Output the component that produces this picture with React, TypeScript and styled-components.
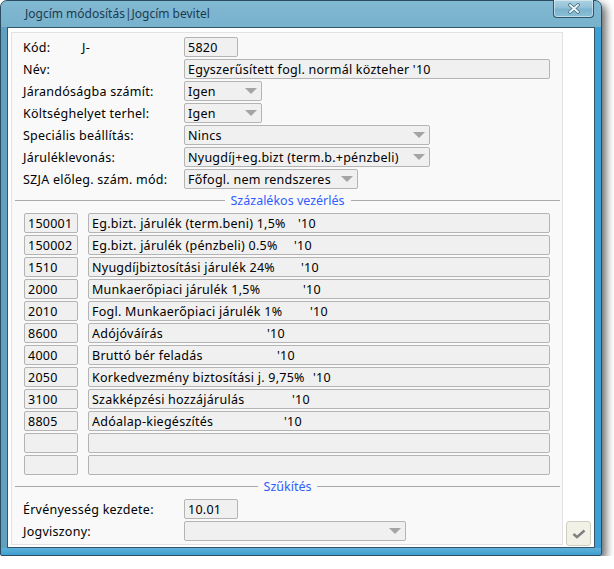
import React from 'react';
import styled, { createGlobalStyle } from 'styled-components';

const GlobalStyle = createGlobalStyle`
  html, body { margin: 0; padding: 0; background: #ffffff; }
  body { font-family: "Segoe UI", "Noto Sans", sans-serif; font-size: 12.5px; letter-spacing: 0.25px; color: #000; }
  * { box-sizing: border-box; }
`;

const Window = styled.div`
  width: 602px;
  height: 556px;
  border: 1px solid #2c4c5f;
  border-radius: 7px 7px 2px 2px;
  background:
    linear-gradient(to top, #3f9fd1 0, #5db0d8 7px, transparent 7px),
    linear-gradient(90deg, #5f9fc1 0%, #79b3ce 12%, #7bb4cf 80%, #3a9fd4 100%);
  box-shadow: 4px 4px 8px rgba(0, 0, 0, 0.6);
  display: flex;
  flex-direction: column;
  padding: 0 6px 7px 6px;
`;

const TitleBar = styled.div`
  height: 26px;
  display: flex;
  justify-content: space-between;
  align-items: flex-start;
  background: linear-gradient(to bottom, #82b9d3, #77b1cc);
  margin: 0 -6px;
  padding: 0 6px;
  border-radius: 6px 6px 0 0;
`;

const TitleText = styled.div`
  padding: 4px 0 0 18px;
  font-size: 12px;
  letter-spacing: 0;
  line-height: 18px;
  color: #1d3a4d;
`;

const CloseButton = styled.div`
  width: 41px;
  height: 18px;
  margin: -1px 1px 0 0;
  border: 1px solid #2f5467;
  border-top: none;
  border-radius: 0 0 4px 4px;
  background: linear-gradient(to bottom, #aed1e2 0%, #92c1d7 45%, #7cb3cd 55%, #8bc0d7 100%);
  box-shadow: inset 0 0 0 1px rgba(255, 255, 255, 0.45);
  display: flex;
  align-items: center;
  justify-content: center;
`;

const Client = styled.div`
  flex: 1;
  border: 1px solid #34566a;
  background: #ffffff;
  display: flex;
  padding: 4px 3px 2px 3px;
  gap: 3px;
`;

const Panel = styled.div`
  width: 552px;
  flex-shrink: 0;
  border: 1px solid #e2e2e2;
  background: #f9f9f9;
  padding: 4px 2px 0 3px;
  display: flex;
  flex-direction: column;
`;

const SideColumn = styled.div`
  flex: 1;
  display: flex;
  align-items: flex-end;
`;

const OkButton = styled.div`
  width: 25px;
  height: 25px;
  margin-bottom: -1px;
  border: 1px solid #cfcfc0;
  border-radius: 3px;
  background: #f2f1e8;
  display: flex;
  align-items: center;
  justify-content: center;
`;

const FormRow = styled.div`
  height: 20px;
  margin-bottom: 2px;
  padding-left: 8px;
  display: flex;
  align-items: center;
  flex-shrink: 0;
`;

const Label = styled.div`
  width: 161px;
  flex-shrink: 0;
  white-space: nowrap;
  display: flex;
`;

const KodText = styled.span`
  width: 59px;
`;

const Field = styled.div<{ $w: number }>`
  width: ${(p) => p.$w}px;
  height: 20px;
  border: 1px solid #b4b4b4;
  border-radius: 2px;
  background: #f0f0f0;
  padding: 0 3px;
  display: flex;
  align-items: center;
  white-space: nowrap;
  overflow: hidden;
  flex-shrink: 0;
`;

const Arrow = styled.span`
  margin-left: auto;
  margin-right: 1px;
  width: 0;
  height: 0;
  border-left: 6px solid transparent;
  border-right: 6px solid transparent;
  border-top: 6px solid #a4a4a4;
`;

const SectionHeader = styled.div`
  height: 18px;
  margin-bottom: 4px;
  display: flex;
  align-items: center;
  gap: 6px;
  flex-shrink: 0;
`;

const HeaderLine = styled.div`
  flex: 1;
  height: 1px;
  background: #a9a9a9;
`;

const HeaderText = styled.span`
  letter-spacing: 0;
  color: #2f5dff;
`;

const GridRow = styled.div`
  height: 20px;
  margin-bottom: 2px;
  padding-left: 9px;
  display: flex;
  gap: 10px;
  flex-shrink: 0;
`;

const NameText = styled.span<{ $w: number }>`
  display: inline-block;
  width: ${(p) => p.$w}px;
  flex-shrink: 0;
`;

type Item = { code: string; name: string; at: number };

const items: Item[] = [
  { code: '150001', name: 'Eg.bizt. járulék (term.beni) 1,5%', at: 206 },
  { code: '150002', name: 'Eg.bizt. járulék (pénzbeli) 0.5%', at: 202 },
  { code: '1510', name: 'Nyugdíjbiztosítási járulék 24%', at: 209 },
  { code: '2000', name: 'Munkaerőpiaci járulék 1,5%', at: 211 },
  { code: '2010', name: 'Fogl. Munkaerőpiaci járulék 1%', at: 218 },
  { code: '8600', name: 'Adójóváírás', at: 175 },
  { code: '4000', name: 'Bruttó bér feladás', at: 185 },
  { code: '2050', name: 'Korkedvezmény biztosítási j. 9,75%', at: 221 },
  { code: '3100', name: 'Szakképzési hozzájárulás', at: 200 },
  { code: '8805', name: 'Adóalap-kiegészítés', at: 192 },
];

const CloseIcon = () => (
  <svg width="14" height="11" viewBox="0 0 14 11">
    <path d="M3 2 L11 9 M11 2 L3 9" stroke="#47707f" strokeWidth="3.6" strokeLinecap="round" fill="none" />
    <path d="M3 2 L11 9 M11 2 L3 9" stroke="#eef6fa" strokeWidth="1.9" strokeLinecap="round" fill="none" />
  </svg>
);

const CheckIcon = () => (
  <svg width="14" height="10" viewBox="0 0 14 10">
    <path d="M1.5 5 L5 8.2 L12.5 1.5" stroke="#7f7f7f" strokeWidth="2.4" fill="none" strokeLinejoin="miter" />
  </svg>
);

export default function App() {
  return (
    <>
      <GlobalStyle />
      <Window>
        <TitleBar>
          <TitleText>Jogcím módosítás|Jogcím bevitel</TitleText>
          <CloseButton>
            <CloseIcon />
          </CloseButton>
        </TitleBar>
        <Client>
          <Panel>
            <FormRow>
              <Label>
                <KodText>Kód:</KodText>J-
              </Label>
              <Field $w={54}>5820</Field>
            </FormRow>
            <FormRow>
              <Label>Név:</Label>
              <Field $w={366}>Egyszerűsített fogl. normál közteher '10</Field>
            </FormRow>
            <FormRow>
              <Label>Járandóságba számít:</Label>
              <Field $w={78}>
                Igen<Arrow />
              </Field>
            </FormRow>
            <FormRow>
              <Label>Költséghelyet terhel:</Label>
              <Field $w={78}>
                Igen<Arrow />
              </Field>
            </FormRow>
            <FormRow>
              <Label>Speciális beállítás:</Label>
              <Field $w={246}>
                Nincs<Arrow />
              </Field>
            </FormRow>
            <FormRow>
              <Label>Járuléklevonás:</Label>
              <Field $w={246}>
                Nyugdíj+eg.bizt (term.b.+pénzbeli)<Arrow />
              </Field>
            </FormRow>
            <FormRow>
              <Label>SZJA előleg. szám. mód:</Label>
              <Field $w={174}>
                Főfogl. nem rendszeres<Arrow />
              </Field>
            </FormRow>

            <SectionHeader>
              <HeaderLine />
              <HeaderText>Százalékos vezérlés</HeaderText>
              <HeaderLine />
            </SectionHeader>

            {items.map((it) => (
              <GridRow key={it.code}>
                <Field $w={54}>{it.code}</Field>
                <Field $w={462}>
                  <NameText $w={it.at}>{it.name}</NameText>'10
                </Field>
              </GridRow>
            ))}
            <GridRow>
              <Field $w={54} />
              <Field $w={462} />
            </GridRow>
            <GridRow>
              <Field $w={54} />
              <Field $w={462} />
            </GridRow>

            <SectionHeader>
              <HeaderLine />
              <HeaderText>Szűkítés</HeaderText>
              <HeaderLine />
            </SectionHeader>

            <FormRow>
              <Label>Érvényesség kezdete:</Label>
              <Field $w={54}>10.01</Field>
            </FormRow>
            <FormRow>
              <Label>Jogviszony:</Label>
              <Field $w={222}>
                <Arrow />
              </Field>
            </FormRow>
          </Panel>
          <SideColumn>
            <OkButton>
              <CheckIcon />
            </OkButton>
          </SideColumn>
        </Client>
      </Window>
    </>
  );
}
